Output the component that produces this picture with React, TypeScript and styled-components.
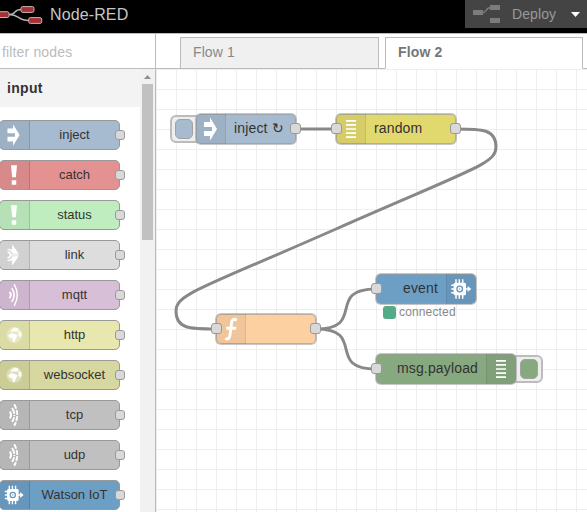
import React from 'react';
import styled, { createGlobalStyle } from 'styled-components';

const GlobalStyle = createGlobalStyle`
  *, *::before { box-sizing: border-box; }
  html, body { margin: 0; padding: 0; overflow: hidden; }
  body { font-family: "Liberation Sans", Arial, sans-serif; font-size: 14px; color: #333; background: #fff; }
`;

const Page = styled.div`
  width: 587px;
  height: 512px;
  display: flex;
  flex-direction: column;
  overflow: hidden;
`;

const Header = styled.header`
  height: 34px;
  flex: none;
  display: flex;
  align-items: flex-start;
  justify-content: space-between;
  background: #000;
  border-bottom: 1px solid #bbb;
`;

const Brand = styled.div`
  display: flex;
  align-items: flex-start;
  height: 30px;
`;

const BrandName = styled.span`
  margin-left: 7px;
  font-size: 16px;
  line-height: 30px;
  letter-spacing: 0.12px;
  color: #c7c7c7;
`;

const Deploy = styled.div`
  width: 122px;
  height: 28px;
  display: flex;
  align-items: center;
  padding-left: 8px;
  background: #444;
  color: #999;
`;

const DeployLabel = styled.span`
  margin-left: 12px;
  width: 59px;
  line-height: 28px;
  letter-spacing: 0.1px;
`;

const Body = styled.div`
  flex: 1;
  min-height: 0;
  display: flex;
`;

const Sidebar = styled.aside`
  width: 156px;
  flex: none;
  display: flex;
  flex-direction: column;
  border-right: 1px solid #bbb;
`;

const Filter = styled.div`
  height: 35px;
  flex: none;
  padding-left: 2px;
  line-height: 37px;
  color: #bbb;
  letter-spacing: 0.15px;
  border-bottom: 1px solid #bbb;
`;

const PaletteArea = styled.div`
  flex: 1;
  min-height: 0;
  display: flex;
`;

const Palette = styled.div`
  width: 140px;
  overflow: hidden;
`;

const Category = styled.div`
  height: 38px;
  padding-left: 7px;
  line-height: 39px;
  font-weight: bold;
  letter-spacing: 0.3px;
  background: #f3f3f3;
`;

const Entries = styled.div`
  display: flex;
  flex-direction: column;
  gap: 10px;
  padding-top: 13px;
`;

const Entry = styled.div<{ $color: string }>`
  position: relative;
  width: 121px;
  height: 30px;
  flex: none;
  margin-left: -1px;
  display: flex;
  border: 1px solid #999;
  border-radius: 5px;
  background: ${p => p.$color};
  font-size: 13px;
`;

const EntryIcon = styled.div`
  width: 30px;
  height: 28px;
  flex: none;
  border-right: 1px solid rgba(0, 0, 0, 0.14);
  border-radius: 4px 0 0 4px;
  background: rgba(0, 0, 0, 0.05);
`;

const EntryLabel = styled.div`
  flex: 1;
  text-align: center;
  line-height: 28px;
`;

const Port = styled.i<{ $x: number; $y: number; $large?: boolean }>`
  position: absolute;
  left: ${p => p.$x}px;
  top: ${p => p.$y}px;
  width: ${p => (p.$large ? 11 : 10)}px;
  height: ${p => (p.$large ? 11 : 10)}px;
  border: 1px solid #999;
  border-radius: 3px;
  background: #d9d9d9;
`;

const Scrollbar = styled.div`
  width: 15px;
  display: flex;
  flex-direction: column;
  align-items: center;
  background: #f1f1f1;
`;

const ScrollThumb = styled.div`
  margin-top: 5px;
  width: 11px;
  height: 156px;
  background: #c1c1c1;
`;

const ScrollArrow = styled.svg`
  display: block;
  margin-top: 6px;
`;

const Workspace = styled.main`
  flex: 1;
  min-width: 0;
  display: flex;
  flex-direction: column;
`;

const Tabs = styled.div`
  height: 35px;
  flex: none;
  display: flex;
  align-items: flex-end;
  gap: 6px;
  padding-left: 24px;
  box-shadow: inset 0 -1px #bbb;
`;

const Tab = styled.div<{ $active?: boolean }>`
  width: ${p => (p.$active ? 198 : 199)}px;
  height: 32px;
  padding-left: 12px;
  line-height: 29px;
  letter-spacing: ${p => (p.$active ? 0.15 : 0.1)}px;
  border: 1px solid #bbb;
  border-bottom-color: ${p => (p.$active ? '#fff' : '#bbb')};
  background: ${p => (p.$active ? '#fff' : '#f0f0f0')};
  color: ${p => (p.$active ? '#777' : '#888')};
  font-weight: ${p => (p.$active ? 'bold' : 'normal')};
`;

const Canvas = styled.div`
  position: relative;
  flex: 1;
  overflow: hidden;
  background-image: linear-gradient(#eee 1px, transparent 1px), linear-gradient(90deg, #eee 1px, transparent 1px);
  background-size: 20px 20px;
`;

const Wires = styled.svg`
  position: absolute;
  left: 0;
  top: 0;
`;

const FlowNode = styled.div<{ $x: number; $y: number; $w: number; $color: string; $flip?: boolean }>`
  position: absolute;
  left: ${p => p.$x}px;
  top: ${p => p.$y}px;
  width: ${p => p.$w}px;
  height: 32px;
  display: flex;
  flex-direction: ${p => (p.$flip ? 'row-reverse' : 'row')};
  border: 1px solid rgba(153, 153, 153, 0.55);
  border-radius: 6px;
  background: ${p => p.$color} padding-box;
  box-shadow: inset 0 0 0 1px rgba(153, 153, 153, 0.65);
`;

const FlowIcon = styled.div<{ $flip?: boolean }>`
  width: 30px;
  height: 30px;
  flex: none;
  background: rgba(0, 0, 0, 0.05);
  box-shadow: inset ${p => (p.$flip ? 1 : -1)}px 0 rgba(0, 0, 0, 0.08);
  border-radius: ${p => (p.$flip ? '0 5px 5px 0' : '5px 0 0 5px')};
`;

const FlowLabel = styled.div<{ $flip?: boolean }>`
  flex: 1;
  padding: ${p => (p.$flip ? '0 8px 0 0' : '0 0 0 8px')};
  text-align: ${p => (p.$flip ? 'right' : 'left')};
  line-height: 28px;
  letter-spacing: 0.15px;
  white-space: nowrap;
`;

const NodeButton = styled.div<{ $x: number; $y: number; $color: string; $side: 'left' | 'right' }>`
  position: absolute;
  left: ${p => p.$x}px;
  top: ${p => p.$y}px;
  width: 32px;
  height: 28px;
  display: flex;
  align-items: center;
  justify-content: ${p => (p.$side === 'left' ? 'flex-start' : 'flex-end')};
  padding: 0 3px;
  border: 2px solid #bcbcbc;
  border-radius: 6px;
  background: #eee;

  &::before {
    content: '';
    width: 18px;
    height: 20px;
    border: 1.5px solid #a2a2a2;
    border-radius: 5px;
    background: ${p => p.$color};
  }
`;

const Status = styled.div`
  position: absolute;
  left: 227px;
  top: 236px;
  display: flex;
  align-items: center;
  gap: 3px;
  height: 14px;
  font-size: 12px;
  line-height: 14px;
  letter-spacing: 0.15px;
  color: #888;

  &::before {
    content: '';
    width: 13px;
    height: 13px;
    border-radius: 3px;
    background: #5a8;
  }
`;

type IconName = 'inject' | 'alert' | 'link' | 'waves' | 'globe' | 'bridge' | 'chip' | 'lines' | 'function';

const shapes: Record<IconName, React.ReactNode> = {
  inject: <path d="M8 8H14V3.5L21 15L14 26.5V22H8V17H16V13H8Z" fill="#fff" />,
  alert: <path d="M11.8 4.5H18.2L17 17.5H13ZM12.6 20.7H17.4V25.5H12.6Z" fill="#fff" />,
  link: (
    <g>
      <path d="M13 3.5L20 13.6H13.5Q12 9.8 8 9.4V8.2Q10.8 8.2 13 9.4ZM13 26.5L20 16.4H13.5Q12 20.2 8 20.6V21.8Q10.8 21.8 13 20.6Z" fill="#fff" />
      <path d="M8 10.8Q12.3 11.5 12.4 15Q12.3 18.5 8 19.2V17.2Q10.2 17 10.3 15Q10.2 13 8 12.8Z" fill="#fff" opacity=".9" />
      <path d="M12 15H20" stroke="#fff" strokeWidth="1.3" />
    </g>
  ),
  waves: (
    <g fill="none" stroke="#fff" strokeLinecap="round">
      <path d="M10.6 12.2Q12.8 15 10.6 17.8" strokeWidth="2" />
      <path d="M12.9 8.2Q17.4 15 12.9 21.8" strokeWidth="1.8" />
      <path d="M15.4 3.8Q21.6 15 15.4 26.2" strokeWidth="1.5" />
    </g>
  ),
  globe: (
    <g fill="#fff">
      <circle cx="15.4" cy="15" r="8.5" opacity=".35" />
      <path d="M11.5 10.8L13 8.5L16 7L19.5 8L20 10.5L17.5 11.8L14.5 11L12.5 12.4Z" opacity=".9" />
      <path d="M19.5 11.5L22.4 11L23.3 15L21.4 18L19.6 15.4Z" opacity=".8" />
      <path d="M9 15L12 13.2L16.2 13.8L18.8 15.6L17.3 18.6L15.4 22.8L13.8 22.2L13.4 18.8L9.7 17.8Z" opacity=".95" />
    </g>
  ),
  bridge: (
    <g fill="none" stroke="#fff">
      <path d="M10.7 11.2Q13 15 10.7 18.8" strokeWidth="2.1" />
      <path d="M13 7.4Q17.8 15 13 22.6" strokeWidth="2" strokeDasharray="6.8 1.2 1.2 1.2" />
      <path d="M15.2 3.4Q21.8 15 15.2 26.6" strokeWidth="2" strokeDasharray="5.4 1.3" />
    </g>
  ),
  chip: (
    <g>
      <path
        d="M10 5.2V9M13.3 5.2V9M16.7 5.2V9M10 21V24.8M13.3 21V24.8M16.7 21V24.8M5.2 11.3H9M5.2 15H9M5.2 18.7H9M19 15H23"
        stroke="#fff"
        strokeWidth="1.5"
      />
      <rect x="7.6" y="8.7" width="12.4" height="12.6" rx="1.5" fill="#fff" />
      <path d="M21.6 11.9L25.3 15L21.6 18.1Z" fill="#fff" />
      <circle cx="13.7" cy="15" r="2.8" fill="none" stroke="#6795b8" strokeWidth="1.3" />
      <path d="M13.7 13.9V16.1" stroke="#87adca" strokeWidth="0.9" />
    </g>
  ),
  lines: <path d="M10 6.8H20M10 10.9H20M10 15H20M10 19.1H20M10 23.2H20" stroke="#fff" strokeWidth="1.7" />,
  function: (
    <path
      d="M20.8 6.3Q16.2 3.4 15.5 9L14 21Q13.2 26.6 9.3 24.2M10.3 14.2H20.2"
      fill="none"
      stroke="#fff"
      strokeWidth="2.9"
    />
  ),
};

const IconSvg = styled.svg`
  display: block;
`;

const Icon = ({ name, size }: { name: IconName; size: number }) => (
  <IconSvg width={size} height={size} viewBox="0 0 30 30">
    {shapes[name]}
  </IconSvg>
);

const entries: { label: string; color: string; icon: IconName }[] = [
  { label: 'inject', color: '#a6bbcf', icon: 'inject' },
  { label: 'catch', color: '#e49191', icon: 'alert' },
  { label: 'status', color: '#c0edc0', icon: 'alert' },
  { label: 'link', color: '#ddd', icon: 'link' },
  { label: 'mqtt', color: '#d8bfd8', icon: 'waves' },
  { label: 'http', color: '#e7e7ae', icon: 'globe' },
  { label: 'websocket', color: '#d7d7a0', icon: 'globe' },
  { label: 'tcp', color: '#c0c0c0', icon: 'bridge' },
  { label: 'udp', color: '#c0c0c0', icon: 'bridge' },
  { label: 'Watson IoT', color: '#6d9fc5', icon: 'chip' },
];

const nodes: { label: string; x: number; y: number; w: number; color: string; icon: IconName; flip?: boolean }[] = [
  { label: 'inject ↻', x: 39, y: 44, w: 102, color: '#a6bbcf', icon: 'inject' },
  { label: 'random', x: 179, y: 44, w: 122, color: '#e2d96e', icon: 'lines' },
  { label: '', x: 59, y: 244, w: 102, color: '#fdd0a2', icon: 'function' },
  { label: 'event', x: 219, y: 204, w: 102, color: '#6d9fc5', icon: 'chip', flip: true },
  { label: 'msg.payload', x: 219, y: 284, w: 142, color: '#87a980', icon: 'lines', flip: true },
];

const ports = [
  [134, 54], [175, 54], [294, 54], [55, 254], [154, 254], [215, 214], [215, 294],
];

const Logo = () => (
  <svg width="43" height="30" viewBox="0 0 43 30">
    <path d="M9 14.5C17 14.5 13 9.5 21 9.5M9 14.5C20 14.5 17 20.5 29 20.5" fill="none" stroke="#b5b5b5" strokeWidth="1.3" />
    <g fill="#a33034" stroke="#c4b4b4" strokeWidth="1">
      <rect x="-4" y="11.7" width="13" height="5.8" rx="1.7" />
      <rect x="21" y="6.6" width="13" height="5.8" rx="1.7" />
      <rect x="28.7" y="17.6" width="13" height="5.8" rx="1.7" />
    </g>
  </svg>
);

export default function App() {
  return (
    <Page>
      <GlobalStyle />
      <Header>
        <Brand>
          <Logo />
          <BrandName>Node-RED</BrandName>
        </Brand>
        <Deploy>
          <svg width="27" height="28" viewBox="0 0 27 28">
            <path d="M0 10H10V15H0ZM17 5H27V10H17ZM17 18H27V23H17Z" fill="#7c7c7c" />
            <path d="M9 13C14 13 12 7.5 18 7.5" fill="none" stroke="#7c7c7c" strokeWidth="1.4" />
          </svg>
          <DeployLabel>Deploy</DeployLabel>
          <svg width="9" height="5" viewBox="0 0 9 5">
            <path d="M0 0H9L4.5 5Z" fill="#fff" />
          </svg>
        </Deploy>
      </Header>
      <Body>
        <Sidebar>
          <Filter>filter nodes</Filter>
          <PaletteArea>
            <Palette>
              <Category>input</Category>
              <Entries>
                {entries.map(e => (
                  <Entry key={e.label} $color={e.color}>
                    <EntryIcon>
                      <Icon name={e.icon} size={28} />
                    </EntryIcon>
                    <EntryLabel>{e.label}</EntryLabel>
                    <Port $x={115} $y={9} />
                  </Entry>
                ))}
              </Entries>
            </Palette>
            <Scrollbar>
              <ScrollArrow width="7" height="4" viewBox="0 0 7 4">
                <path d="M0 4L3.5 0L7 4Z" fill="#8f8f8f" />
              </ScrollArrow>
              <ScrollThumb />
            </Scrollbar>
          </PaletteArea>
        </Sidebar>
        <Workspace>
          <Tabs>
            <Tab>Flow 1</Tab>
            <Tab $active>Flow 2</Tab>
          </Tabs>
          <Canvas>
            <Wires width="431" height="443" viewBox="156 69 431 443" fill="none" stroke="#888" strokeWidth="3">
              <path d="M296 129H336" />
              <path d="M456 129C482 129 496 129 496 147C496 164 472 169 336 229C200 289 176 294 176 311C176 329 190 329 216 329" />
              <path d="M316 329C367 329 325 289 376 289" />
              <path d="M316 329C367 329 325 369 376 369" />
            </Wires>
            <NodeButton $x={14} $y={46} $color="#a6bbcf" $side="left" />
            <NodeButton $x={355} $y={286} $color="#87a980" $side="right" />
            {nodes.map(n => (
              <FlowNode key={n.icon + n.x} $x={n.x} $y={n.y} $w={n.w} $color={n.color} $flip={n.flip}>
                <FlowIcon $flip={n.flip}>
                  <Icon name={n.icon} size={30} />
                </FlowIcon>
                <FlowLabel $flip={n.flip}>{n.label}</FlowLabel>
              </FlowNode>
            ))}
            {ports.map(([x, y]) => (
              <Port key={`${x}-${y}`} $x={x} $y={y} $large />
            ))}
            <Status>connected</Status>
          </Canvas>
        </Workspace>
      </Body>
    </Page>
  );
}
